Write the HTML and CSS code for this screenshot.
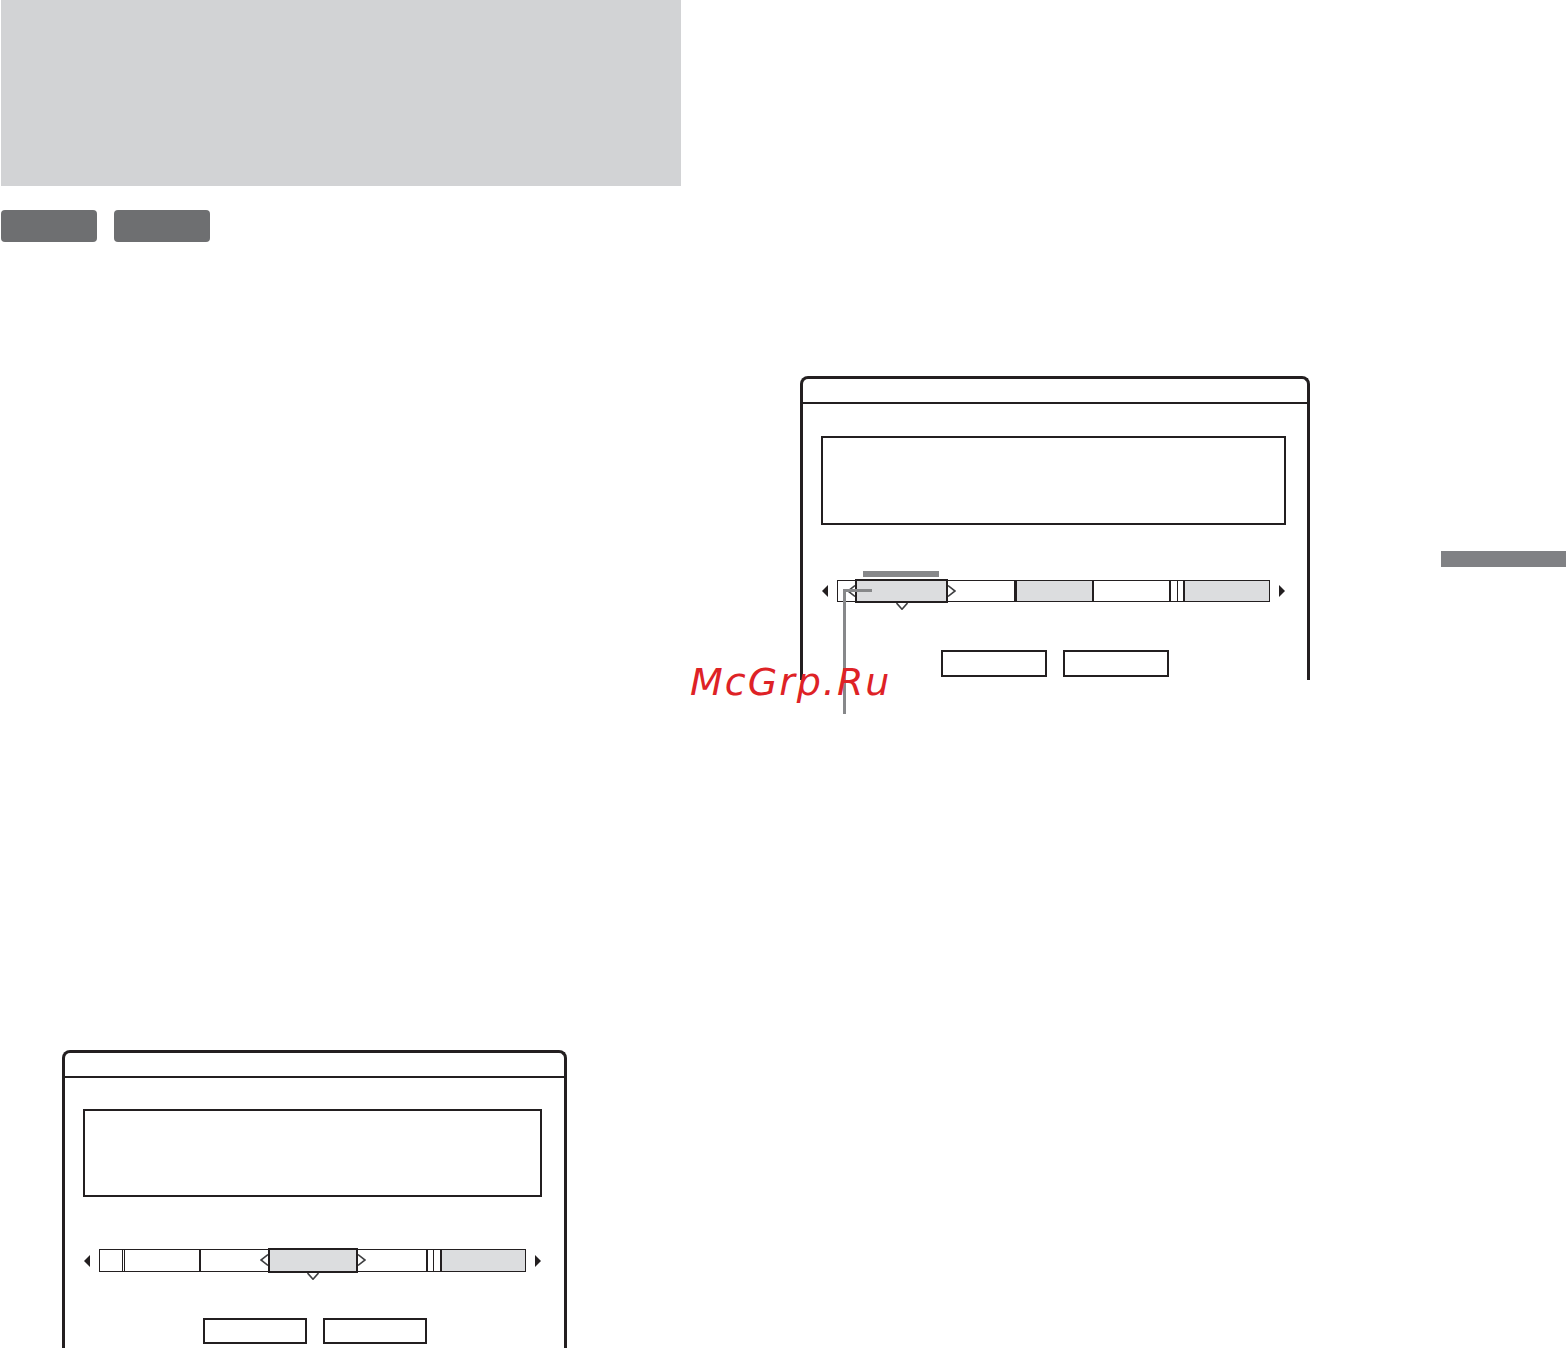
FILE: index.html
```html
<!DOCTYPE html>
<html lang="ru">
<head>
  <meta charset="UTF-8" />
  <meta name="viewport" content="width=device-width, initial-scale=1.0"/>
  <title>Chapter editing</title>
  <link rel="stylesheet" href="styles.css">
</head>
<body>
  <div class="page">
    <div class="col-left">
      <div class="chapter-head"></div>
      <div class="tags">
        <span class="tag"></span>
        <span class="tag"></span>
      </div>

      <!-- chapter screen, erase step -->
      <div class="dialog dialog-lower">
        <div class="dialog-title"></div>
        <div class="dialog-body">
          <div class="info-box"></div>
          <div class="timeline">
            <span class="arrow arrow-left"></span>
            <div class="track">
              <div class="seg edge-r" style="width:23px"></div>
              <div class="seg thin gap" style="width:75px"></div>
              <div class="seg div" style="width:69px"></div>
              <div class="seg current" style="width:90px">
                <svg class="ptr ptr-l" width="8" height="12" viewBox="0 0 8 12"><polyline points="8,0.6 1,6 8,11.4" /></svg>
                <svg class="ptr ptr-r" width="8" height="12" viewBox="0 0 8 12"><polyline points="0,0.6 7,6 0,11.4" /></svg>
                <svg class="ptr ptr-b" width="12" height="7" viewBox="0 0 12 7"><polyline points="0.5,0 6,6.2 11.5,0" /></svg>
              </div>
              <div class="seg" style="width:68px"></div>
              <div class="seg div" style="width:7px"></div>
              <div class="seg thin" style="width:7px"></div>
              <div class="seg div shaded last"></div>
            </div>
            <span class="arrow arrow-right"></span>
          </div>
          <div class="buttons">
            <span class="btn"></span>
            <span class="btn"></span>
          </div>
        </div>
      </div>
    </div>

    <div class="col-right">
      <!-- chapter screen, select step -->
      <div class="dialog dialog-upper">
        <div class="dialog-title"></div>
        <div class="dialog-body">
          <div class="info-box"></div>
          <div class="timeline">
            <span class="arrow arrow-left"></span>
            <div class="track">
              <div class="seg" style="width:17px"></div>
              <div class="seg current" style="width:93px">
                <svg class="ptr ptr-l" width="8" height="12" viewBox="0 0 8 12"><polyline points="8,0.6 1,6 8,11.4" /></svg>
                <svg class="ptr ptr-r" width="8" height="12" viewBox="0 0 8 12"><polyline points="0,0.6 7,6 0,11.4" /></svg>
                <svg class="ptr ptr-b" width="12" height="7" viewBox="0 0 12 7"><polyline points="0.5,0 6,6.2 11.5,0" /></svg>
                <span class="callout-label"></span>
                <span class="callout-line"></span>
              </div>
              <div class="seg" style="width:66px"></div>
              <div class="seg div-wide shaded" style="width:78px"></div>
              <div class="seg div" style="width:77px"></div>
              <div class="seg div" style="width:8px"></div>
              <div class="seg thin" style="width:6px"></div>
              <div class="seg div shaded last"></div>
            </div>
            <span class="arrow arrow-right"></span>
          </div>
          <div class="buttons">
            <span class="btn"></span>
            <span class="btn"></span>
          </div>
        </div>
      </div>
    </div>

    <div class="thumb-tab"></div>
  </div>

  <div class="watermark">McGrp.Ru</div>
</body>
</html>
```

FILE: styles.css
```css
html, body {
  margin: 0;
  background: #fff;
  overflow: hidden;
}
body {
  font-family: "DejaVu Sans", sans-serif;
  position: relative;
  height: 1361px;
}
.page {
  display: flex;
  align-items: flex-start;
}

/* left column */
.col-left {
  width: 680px;
  padding-left: 1px;
  flex: none;
}
.chapter-head {
  height: 186px;
  background: #d2d3d5;
}
.tags {
  display: flex;
  gap: 17px;
  margin-top: 24px;
}
.tag {
  width: 96px;
  height: 32px;
  border-radius: 4px;
  background: #6e6f71;
}

/* right column */
.col-right {
  margin-left: 119px;
  padding-top: 376px;
  flex: none;
}
.thumb-tab {
  margin-left: 131px;
  margin-top: 551px;
  width: 125px;
  height: 16px;
  background: #808184;
  flex: none;
}

/* on-screen dialog */
.dialog {
  box-sizing: border-box;
  border: 3px solid #231f20;
  border-bottom: none;
  border-radius: 8px 8px 0 0;
  background: #fff;
}
.dialog-upper {
  width: 510px;
}
.dialog-lower {
  width: 505px;
  margin-top: 808px;
  margin-left: 61px;
}
.dialog-title {
  height: 23px;
  border-bottom: 2px solid #231f20;
}
.dialog-body {
  padding: 32px 21px 3px 18px;
}
.dialog-lower .dialog-body {
  padding-top: 31px;
  padding-right: 22px;
  padding-bottom: 4px;
}
.info-box {
  box-sizing: border-box;
  height: 89px;
  border: 2px solid #231f20;
}
.dialog-lower .info-box {
  height: 88px;
}

/* chapter bar */
.timeline {
  display: flex;
  align-items: center;
  margin-top: 55px;
}
.dialog-lower .timeline {
  margin-top: 52px;
}
.arrow {
  width: 0;
  height: 0;
  border-top: 6px solid transparent;
  border-bottom: 6px solid transparent;
  flex: none;
}
.arrow-left {
  border-right: 6px solid #231f20;
  margin: 0 9px 0 1px;
}
.arrow-right {
  border-left: 6px solid #231f20;
  margin: 0 1px 0 9px;
}
.track {
  flex: 1;
  display: flex;
  box-sizing: border-box;
  height: 22px;
  border: 1px solid #231f20;
  background: #fff;
}
.dialog-lower .track {
  height: 23px;
}
.seg {
  box-sizing: border-box;
  flex: none;
}
.seg.last {
  flex: 1;
}
.seg.shaded {
  background: #dcdddf;
}
.seg.div {
  border-left: 2px solid #231f20;
}
.seg.div-wide {
  border-left: 3px solid #231f20;
}
.seg.thin {
  border-left: 1px solid #231f20;
}
.seg.edge-r {
  border-right: 1px solid #231f20;
}
.seg.gap {
  margin-left: 1px;
}
.seg.current {
  position: relative;
  margin: -2px 0;
  border: 2px solid #231f20;
  background: #dcdddf;
  z-index: 1;
}

/* little markers around the current chapter */
.ptr {
  position: absolute;
  display: block;
  fill: #fff;
  stroke: #3e3f41;
  stroke-width: 1.6;
}
.ptr-l {
  left: -10px;
  top: 4px;
}
.ptr-r {
  right: -10px;
  top: 4px;
}
.ptr-b {
  left: 50%;
  margin-left: -6px;
  top: calc(100% + 2px);
}

/* callout from the chapter number */
.callout-label {
  position: absolute;
  left: 6px;
  top: -10px;
  width: 76px;
  height: 6px;
  background: #87888a;
}
.callout-line {
  position: absolute;
  left: -14px;
  top: 8px;
  width: 26px;
  height: 122px;
  border-left: 3px solid #87888a;
  border-top: 3px solid #87888a;
}

/* OK / cancel */
.buttons {
  display: flex;
  justify-content: center;
  gap: 16px;
  margin-top: 48px;
  padding-left: 2px;
}
.btn {
  display: block;
  box-sizing: border-box;
  width: 106px;
  height: 27px;
  border: 2px solid #231f20;
}
.dialog-lower .buttons {
  margin-top: 46px;
  padding-left: 5px;
}
.dialog-lower .btn {
  width: 104px;
  height: 26px;
}

.watermark {
  position: absolute;
  left: 690px;
  top: 663px;
  font-family: "DejaVu Sans", sans-serif;
  font-style: italic;
  font-size: 38px;
  line-height: 1;
  letter-spacing: 2px;
  color: #de2226;
  z-index: 5;
}
```
